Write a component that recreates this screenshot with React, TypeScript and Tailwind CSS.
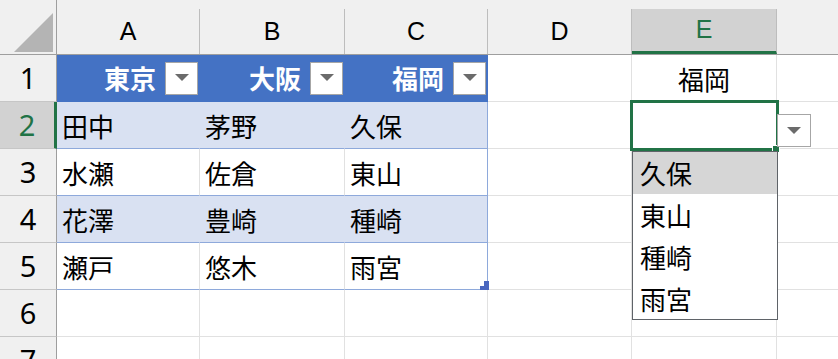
import React from 'react';

const JP = { fontFamily: '"Noto Sans CJK JP", "Noto Sans", sans-serif' };
const LAT = { fontFamily: '"Liberation Sans", Arial, sans-serif' };

const cols = [
  { key: 'A', w: 'w-[143px]' },
  { key: 'B', w: 'w-[145px]' },
  { key: 'C', w: 'w-[143px]' },
  { key: 'D', w: 'w-[144px]' },
  { key: 'E', w: 'w-[145px]' },
];

const data = [
  ['田中', '茅野', '久保'],
  ['水瀬', '佐倉', '東山'],
  ['花澤', '豊崎', '種崎'],
  ['瀬戸', '悠木', '雨宮'],
];

function FilterButton() {
  return (
    <div className="w-[33px] h-[33px] bg-white border border-[#a6a6a6] flex items-center justify-center shrink-0">
      <svg width="14" height="8" viewBox="0 0 14 8">
        <polygon points="0,0 14,0 7,7" fill="#6b6b6b" />
      </svg>
    </div>
  );
}

function HeaderCell({ label, w }: { label: string; w: string }) {
  return (
    <div className={`${w} h-[47px] bg-[#4472c4] border-b border-r border-[#4472c4] flex items-center justify-end pr-[1px] gap-[9px] shrink-0`}>
      <span className="text-white font-bold text-[26px] leading-none" style={JP}>
        {label}
      </span>
      <FilterButton />
    </div>
  );
}

export default function App() {
  const rowNums = [1, 2, 3, 4, 5, 6, 7];

  return (
    <div className="relative w-[838px] h-[359px] overflow-hidden bg-white">
      {/* column headers */}
      <div className="flex h-[55px] bg-[#f0f0f0] border-b border-[#9e9e9e]">
        <div className="w-[57px] h-full border-r border-[#9e9e9e] shrink-0 relative">
          <svg className="absolute left-[14px] top-[13px]" width="40" height="40" viewBox="0 0 40 40">
            <polygon points="0,39 39,0 39,39" fill="#b4b4b4" />
          </svg>
        </div>
        {cols.map((c) => (
          <div
            key={c.key}
            className={`${c.w} shrink-0 mt-[9px] flex items-center justify-center text-[25px] border-r border-r-[#bdbdbd] ${
              c.key === 'E' ? 'bg-[#d2d2d2] text-[#217346] border-b-[3px] border-b-[#217346]' : 'text-black'
            }`}
            style={LAT}
          >
            {c.key}
          </div>
        ))}
        <div className="flex-1" />
      </div>

      {rowNums.map((n) => {
        const rowSel = n === 2;
        return (
          <div key={n} className="flex h-[47px]">
            <div
              className={`w-[57px] shrink-0 flex items-center justify-center text-[29px] border-b border-[#c6c6c6] ${
                rowSel
                  ? 'bg-[#d2d2d2] text-[#217346] border-r-[3px] border-r-[#217346]'
                  : 'bg-[#f0f0f0] text-black border-r border-r-[#9e9e9e]'
              }`}
              style={{ fontFamily: '"Noto Sans", "Liberation Sans", sans-serif' }}
            >
              {n}
            </div>
            {n === 1 ? (
              <>
                <HeaderCell label="東京" w="w-[143px]" />
                <HeaderCell label="大阪" w="w-[145px]" />
                <HeaderCell label="福岡" w="w-[143px]" />
                <div className="w-[144px] shrink-0 border-r border-b border-[#e1e1e1]" />
                <div
                  className="w-[145px] shrink-0 border-r border-b border-[#e1e1e1] flex items-center justify-center text-[26px] text-black"
                  style={JP}
                >
                  福岡
                </div>
                <div className="flex-1 border-b border-[#e1e1e1]" />
              </>
            ) : n <= 5 ? (
              <>
                {data[n - 2].map((t, i) => {
                  const band = n % 2 === 0;
                  const w = i === 1 ? 'w-[145px]' : 'w-[143px]';
                  const rb =
                    i === 2 ? 'border-r-[#8ea9db]' : band ? 'border-r-[#d9e1f2]' : 'border-r-[#e1e1e1]';
                  return (
                    <div
                      key={i}
                      className={`${w} shrink-0 ${band ? 'bg-[#d9e1f2]' : 'bg-white'} border-r ${rb} border-b border-b-[#8ea9db] flex items-center pl-[5px] text-[26px] text-black`}
                      style={JP}
                    >
                      {t}
                    </div>
                  );
                })}
                <div className="w-[144px] shrink-0 border-r border-b border-[#e1e1e1]" />
                <div className="w-[145px] shrink-0 border-r border-b border-[#e1e1e1]" />
                <div className="flex-1 border-b border-[#e1e1e1]" />
              </>
            ) : (
              <>
                <div className="w-[143px] shrink-0 border-r border-b border-[#e1e1e1]" />
                <div className="w-[145px] shrink-0 border-r border-b border-[#e1e1e1]" />
                <div className="w-[143px] shrink-0 border-r border-b border-[#e1e1e1]" />
                <div className="w-[144px] shrink-0 border-r border-b border-[#e1e1e1]" />
                <div className="w-[145px] shrink-0 border-r border-b border-[#e1e1e1]" />
                <div className="flex-1 border-b border-[#e1e1e1]" />
              </>
            )}
          </div>
        );
      })}

      {/* table resize handle */}
      <svg className="absolute left-[480px] top-[281px]" width="9" height="9" viewBox="0 0 9 9">
        <polygon points="4,0 9,0 9,9 0,9 0,5 4,5" fill="#4a66bf" />
      </svg>

      {/* active cell E2 */}
      <div className="absolute left-[630px] top-[100px] w-[149px] h-[51px] border-[3px] border-[#217346]" />
      <div className="absolute left-[772px] top-[145px] w-[8px] h-[8px] bg-[#217346] border border-white" />

      {/* validation dropdown button */}
      <div className="absolute left-[777px] top-[114px] w-[34px] h-[33px] bg-white border border-[#a6a6a6] flex items-center justify-center">
        <svg width="14" height="8" viewBox="0 0 14 8">
          <polygon points="0,0 14,0 7,7" fill="#6b6b6b" />
        </svg>
      </div>

      {/* dropdown list */}
      <div className="absolute left-[632px] top-[151px] w-[146px] h-[169px] bg-white border border-[#5f6368] flex flex-col" style={JP}>
        {['久保', '東山', '種崎', '雨宮'].map((t, i) => (
          <div
            key={t}
            className={`h-[42px] flex items-center pl-[7px] text-[26px] text-black ${i === 0 ? 'bg-[#d6d6d6]' : ''}`}
          >
            {t}
          </div>
        ))}
      </div>
    </div>
  );
}
